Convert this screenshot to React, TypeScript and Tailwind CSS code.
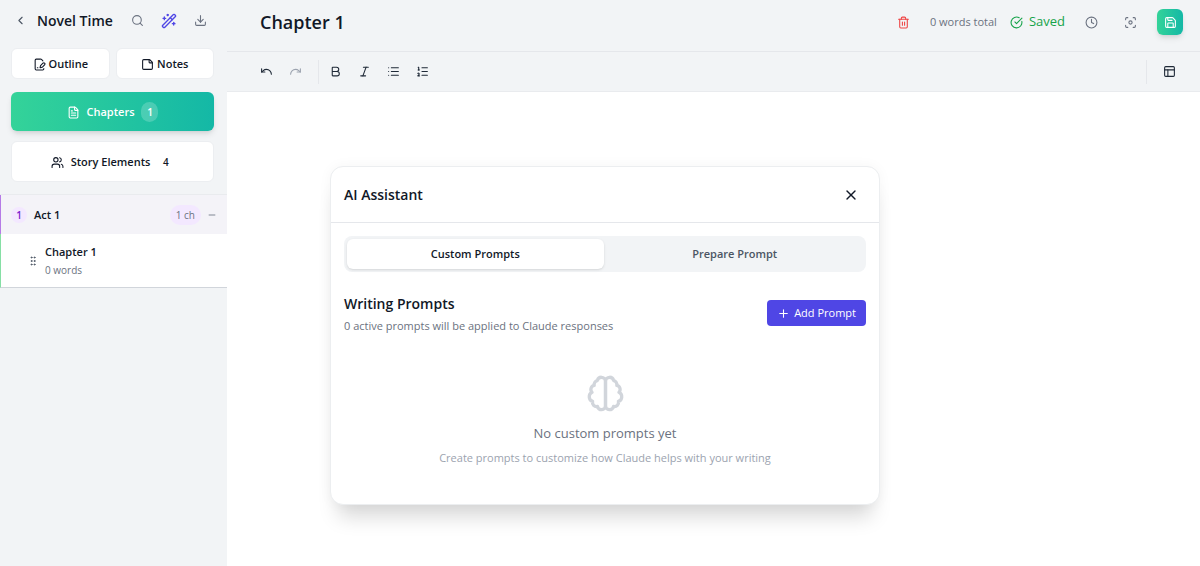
import { useState } from "react";
import clsx from "clsx";
import {
  Bold,
  ChevronLeft,
  CircleCheckBig,
  Clock,
  Download,
  FilePenLine,
  FileText,
  Focus,
  GripVertical,
  Italic,
  List,
  ListOrdered,
  Minus,
  PanelsTopLeft,
  Plus,
  Redo,
  Save,
  Search,
  StickyNote,
  Trash2,
  Undo,
  Users,
  WandSparkles,
  X,
} from "lucide-react";

const BrainIcon = ({ size = 24 }: { size?: number }) => (
  <svg
    width={size}
    height={size}
    viewBox="0 0 24 24"
    fill="none"
    stroke="currentColor"
    strokeWidth={2}
    strokeLinecap="round"
    strokeLinejoin="round"
    aria-hidden="true"
  >
    <path d="M9.5 2A2.5 2.5 0 0 1 12 4.5v15a2.5 2.5 0 0 1-4.96.44 2.5 2.5 0 0 1-2.96-3.08 3 3 0 0 1-.34-5.58 2.5 2.5 0 0 1 1.32-4.24 2.5 2.5 0 0 1 1.98-3A2.5 2.5 0 0 1 9.5 2Z" />
    <path d="M14.5 2A2.5 2.5 0 0 0 12 4.5v15a2.5 2.5 0 0 0 4.96.44 2.5 2.5 0 0 0 2.96-3.08 3 3 0 0 0 .34-5.58 2.5 2.5 0 0 0-1.32-4.24 2.5 2.5 0 0 0-1.98-3A2.5 2.5 0 0 0 14.5 2Z" />
  </svg>
);

const sideButton =
  "flex flex-1 items-center justify-center rounded-md border border-[#eceef1] bg-white pt-px font-semibold";

const Sidebar = () => (
  <aside className="flex w-[227px] shrink-0 flex-col bg-[#f2f4f6]">
    <div className="flex h-[41px] items-center pl-[14px] pr-5">
      <button aria-label="Back" className="text-[#4b5563]">
        <ChevronLeft size={13} />
      </button>
      <h1 className="ml-[10px] flex-1 whitespace-nowrap text-[14px] font-semibold">
        Novel Time
      </h1>
      <div className="flex items-center gap-[17px] text-[#6b7280]">
        <button aria-label="Search">
          <Search size={13} />
        </button>
        <button aria-label="AI assistant" className="text-[#4f46e5]">
          <WandSparkles size={16} />
        </button>
        <button aria-label="Download">
          <Download size={13} />
        </button>
      </div>
    </div>

    <div className="flex flex-col pl-[11px] pr-[13px] pt-[7px] text-[11px]">
      <div className="flex gap-[6px]">
        <button className={clsx(sideButton, "h-[31px] gap-[3px]")}>
          <FilePenLine size={13} />
          Outline
        </button>
        <button className={clsx(sideButton, "h-[31px] gap-[3px]")}>
          <StickyNote size={13} />
          Notes
        </button>
      </div>
      <button className="mt-[13px] flex h-[39px] items-center justify-center gap-[7px] rounded-md bg-linear-to-r/srgb from-[#34d399] to-[#14b8a6] pt-px font-semibold text-white shadow-md">
        <FileText size={13} />
        Chapters
        <span className="flex h-5 w-[17px] items-center justify-center rounded-full bg-white/20 text-[10px]">
          1
        </span>
      </button>
      <button className={clsx(sideButton, "mt-[10px] min-h-[41px] gap-[7px]")}>
        <Users size={13} />
        Story Elements
        <span className="w-[17px] text-center text-[10px]">4</span>
      </button>
    </div>

    <nav className="mt-3 border-t border-[#e9ebee]">
      <div className="flex h-[39px] items-center border-l border-[#b57be6] bg-[#f4f3f8] px-[10px] pt-px">
        <span className="flex size-4 items-center justify-center rounded-full bg-[#f3e8ff] text-[10px] font-semibold text-[#7e22ce]">
          1
        </span>
        <span className="ml-[7px] flex-1 text-[11px] font-semibold">Act 1</span>
        <span className="flex h-5 items-center rounded-full bg-[#f3e8ff] px-[6px] text-[10px] text-[#6b7280]">
          1 ch
        </span>
        <button aria-label="Collapse Act 1" className="ml-[6px] text-[#6b7280]">
          <Minus size={10} />
        </button>
      </div>
      <div className="flex h-[54px] items-center border-b border-l border-b-[#d1d5db] border-l-[#86dfa5] bg-white pl-[26px]">
        <GripVertical size={12} className="text-[#4b5563]" />
        <div className="ml-[6px] pt-px">
          <p className="text-[11px] leading-4 font-semibold">Chapter 1</p>
          <p className="mt-[2px] text-[10px] leading-4 text-[#6b7280]">
            0 words
          </p>
        </div>
      </div>
    </nav>
  </aside>
);

const Header = () => (
  <header className="flex h-[52px] items-center justify-between border-b border-[#e5e7eb] bg-[#f2f4f6] pb-[7px] pl-[33px] pr-[17px]">
    <h2 className="text-[18px] font-semibold">Chapter 1</h2>
    <div className="flex items-center text-[#6b7280]">
      <button aria-label="Delete chapter" className="text-[#ef4444]">
        <Trash2 size={13} />
      </button>
      <span className="ml-5 text-[11px]">0 words total</span>
      <span className="ml-[13px] flex items-center gap-[6px] text-[13px] text-[#16a34a]">
        <CircleCheckBig size={13} />
        Saved
      </span>
      <button aria-label="History" className="ml-5">
        <Clock size={13} />
      </button>
      <button aria-label="Focus mode" className="ml-[26px]">
        <Focus size={13} />
      </button>
      <button
        aria-label="Save"
        className="ml-5 flex size-[26px] items-center justify-center rounded-md bg-linear-to-r/srgb from-[#34d399] to-[#14b8a6] text-white shadow-md"
      >
        <Save size={13} />
      </button>
    </div>
  </header>
);

const Toolbar = () => (
  <div className="flex h-10 items-center border-b border-[#e9ebee] bg-[#f2f4f6] pl-[33px] pr-6 text-[#1f2937]">
    <button aria-label="Undo">
      <Undo size={13} />
    </button>
    <button aria-label="Redo" disabled className="ml-4 text-[#9ca3af]">
      <Redo size={13} />
    </button>
    <div className="ml-4 flex h-6 items-center gap-4 border-l border-[#e5e7eb] pl-[10px]">
      <button aria-label="Bold">
        <Bold size={13} />
      </button>
      <button aria-label="Italic">
        <Italic size={13} />
      </button>
      <button aria-label="Bullet list">
        <List size={13} />
      </button>
      <button aria-label="Numbered list">
        <ListOrdered size={13} />
      </button>
    </div>
    <div className="ml-auto flex h-6 items-center border-l border-[#e5e7eb] pl-4">
      <button aria-label="Layout">
        <PanelsTopLeft size={13} />
      </button>
    </div>
  </div>
);

const tabs = ["Custom Prompts", "Prepare Prompt"];

const AssistantDialog = () => {
  const [activeTab, setActiveTab] = useState(tabs[0]);

  return (
    <section
      role="dialog"
      aria-labelledby="assistant-title"
      className="absolute top-[166px] left-[330px] w-[550px] rounded-[13px] border border-[#eceef0] bg-white shadow-[0_20px_20px_-8px_rgba(0,0,0,0.15),0_0_14px_rgba(0,0,0,0.04)]"
    >
      <div className="flex h-14 items-center justify-between border-b border-[#e5e7eb] pl-[13px] pr-5">
        <h2 id="assistant-title" className="text-[14px] font-semibold">
          AI Assistant
        </h2>
        <button aria-label="Close">
          <X size={16} />
        </button>
      </div>
      <div className="px-[13px] pt-[13px] pb-[38px]">
        <div
          role="tablist"
          className="flex h-9 gap-[3px] rounded-lg bg-[#f2f4f6] p-[3px] text-[11px] font-semibold"
        >
          {tabs.map((tab) => (
            <button
              key={tab}
              role="tab"
              aria-selected={tab === activeTab}
              onClick={() => setActiveTab(tab)}
              className={clsx(
                "flex-1 rounded-md pt-px",
                tab === activeTab ? "bg-white shadow-sm" : "text-[#4b5563]"
              )}
            >
              {tab}
            </button>
          ))}
        </div>
        <div className="mt-5 flex items-center justify-between">
          <div>
            <h3 className="text-[14px] leading-6 font-semibold">
              Writing Prompts
            </h3>
            <p className="mt-[2px] text-[11px] leading-4 text-[#6b7280]">
              0 active prompts will be applied to Claude responses
            </p>
          </div>
          <button className="flex h-[26px] items-center gap-1 rounded bg-[#4f46e5] px-[10px] text-[11px] font-medium text-white">
            <Plus size={13} />
            Add Prompt
          </button>
        </div>
        <div className="mt-10 flex flex-col items-center">
          <span className="text-[#d1d5db]">
            <BrainIcon size={39} />
          </span>
          <p className="mt-[10px] text-[13px] leading-5 text-[#6b7280]">
            No custom prompts yet
          </p>
          <p className="mt-[7px] text-[11px] leading-4 text-[#9ca3af]">
            Create prompts to customize how Claude helps with your writing
          </p>
        </div>
      </div>
    </section>
  );
};

const App = () => (
  <div className="relative flex min-h-screen bg-white font-['Open_Sans','Noto_Sans',sans-serif] text-[#111827]">
    <Sidebar />
    <main className="flex min-w-0 flex-1 flex-col">
      <Header />
      <Toolbar />
    </main>
    <AssistantDialog />
  </div>
);

export default App;
